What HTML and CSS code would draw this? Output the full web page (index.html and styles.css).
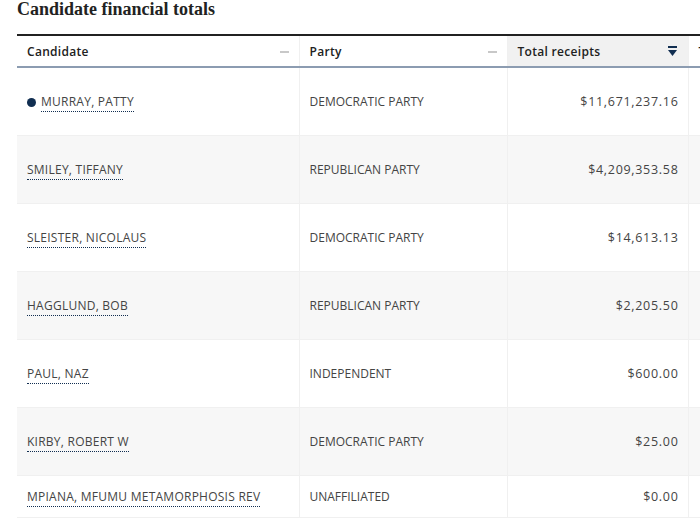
FILE: index.html
```html
<!DOCTYPE html>
<html lang="en">
<head>
    <meta charset="UTF-8">
    <title>Candidate financial totals</title>
    <link rel="stylesheet" href="styles.css">
</head>
<body>
    <h2 class="title">Candidate financial totals</h2>
    <div class="table-wrap">
        <table class="totals">
            <thead>
                <tr>
                    <th class="col-name"><span>Candidate</span><span class="sort-off"></span></th>
                    <th class="col-party"><span>Party</span><span class="sort-off"></span></th>
                    <th class="col-total sorted"><span>Total receipts</span>
                        <svg class="sort-icon" width="9" height="11" viewBox="0 0 9 11"><rect x="0" y="0" width="9" height="2" fill="#112e51"/><path d="M0 4 H9 L4.5 10 Z" fill="#112e51"/></svg>
                    </th>
                    <th class="col-more"><span>T</span></th>
                </tr>
            </thead>
            <tbody>
                <tr>
                    <td><span class="dot"></span><a href="#">MURRAY, PATTY</a></td>
                    <td>DEMOCRATIC PARTY</td>
                    <td class="num">$11,671,237.16</td>
                    <td></td>
                </tr>
                <tr>
                    <td><a href="#">SMILEY, TIFFANY</a></td>
                    <td>REPUBLICAN PARTY</td>
                    <td class="num">$4,209,353.58</td>
                    <td></td>
                </tr>
                <tr>
                    <td><a href="#">SLEISTER, NICOLAUS</a></td>
                    <td>DEMOCRATIC PARTY</td>
                    <td class="num">$14,613.13</td>
                    <td></td>
                </tr>
                <tr>
                    <td><a href="#">HAGGLUND, BOB</a></td>
                    <td>REPUBLICAN PARTY</td>
                    <td class="num">$2,205.50</td>
                    <td></td>
                </tr>
                <tr>
                    <td><a href="#">PAUL, NAZ</a></td>
                    <td>INDEPENDENT</td>
                    <td class="num">$600.00</td>
                    <td></td>
                </tr>
                <tr>
                    <td><a href="#">KIRBY, ROBERT W</a></td>
                    <td>DEMOCRATIC PARTY</td>
                    <td class="num">$25.00</td>
                    <td></td>
                </tr>
                <tr class="short">
                    <td><a href="#">MPIANA, MFUMU METAMORPHOSIS REV</a></td>
                    <td>UNAFFILIATED</td>
                    <td class="num">$0.00</td>
                    <td></td>
                </tr>
            </tbody>
        </table>
    </div>
</body>
</html>
```
FILE: styles.css
```css
body {
    margin: 0;
    padding: 0 0 0 17px;
    background: #fff;
    overflow: hidden;
    font-family: "Open Sans", "Noto Sans", sans-serif;
}
.title {
    margin: 0;
    height: 34px;
    font-family: "Liberation Serif", "DejaVu Serif", serif;
    font-size: 18px;
    font-weight: bold;
    line-height: 18px;
    color: #222;
}
.table-wrap {
    width: 683px;
    overflow: hidden;
}
.totals {
    border-collapse: collapse;
    table-layout: fixed;
    width: 683px;
}
.totals thead th {
    height: 32px;
    padding: 0 10px;
    border-top: 2px solid #212121;
    border-bottom: 2px solid #8c9cb1;
    border-right: 1px solid #f0f0f0;
    font-size: 12px;
    font-weight: 600;
    letter-spacing: 0.3px;
    color: #212121;
    text-align: left;
    box-sizing: border-box;
    overflow: hidden;
    white-space: nowrap;
}
.totals th.sorted {
    background: #f1f1f1;
}
.totals th span:first-child {
    float: left;
}
.sort-off {
    float: right;
    width: 9px;
    height: 2px;
    margin-top: 8px;
    background: #c8c8c8;
}
.sort-icon {
    float: right;
    margin-top: 3px;
    margin-right: 1px;
}
.col-name { width: 282px; }
.col-party { width: 208px; }
.col-total { width: 181px; }
.col-more { width: 12px; }
.totals td {
    height: 67px;
    padding: 0 10px;
    border-right: 1px solid #f0f0f0;
    border-bottom: 1px solid #f0f0f0;
    font-size: 12px;
    color: #444;
    white-space: nowrap;
}
.totals tbody tr:nth-child(even) td {
    background: #f7f7f7;
}
.totals tr.short td {
    height: 41px;
}
.totals td a {
    color: #444;
    letter-spacing: 0.25px;
    text-decoration: none;
    border-bottom: 1px dotted #112e51;
    padding-bottom: 1px;
}
.totals td.num {
    text-align: right;
    font-size: 12.5px;
    letter-spacing: 0.7px;
    padding-right: 9px;
}
.dot {
    display: inline-block;
    width: 9px;
    height: 9px;
    margin-right: 5px;
    border-radius: 50%;
    background: #112e51;
    vertical-align: -1px;
}
```
